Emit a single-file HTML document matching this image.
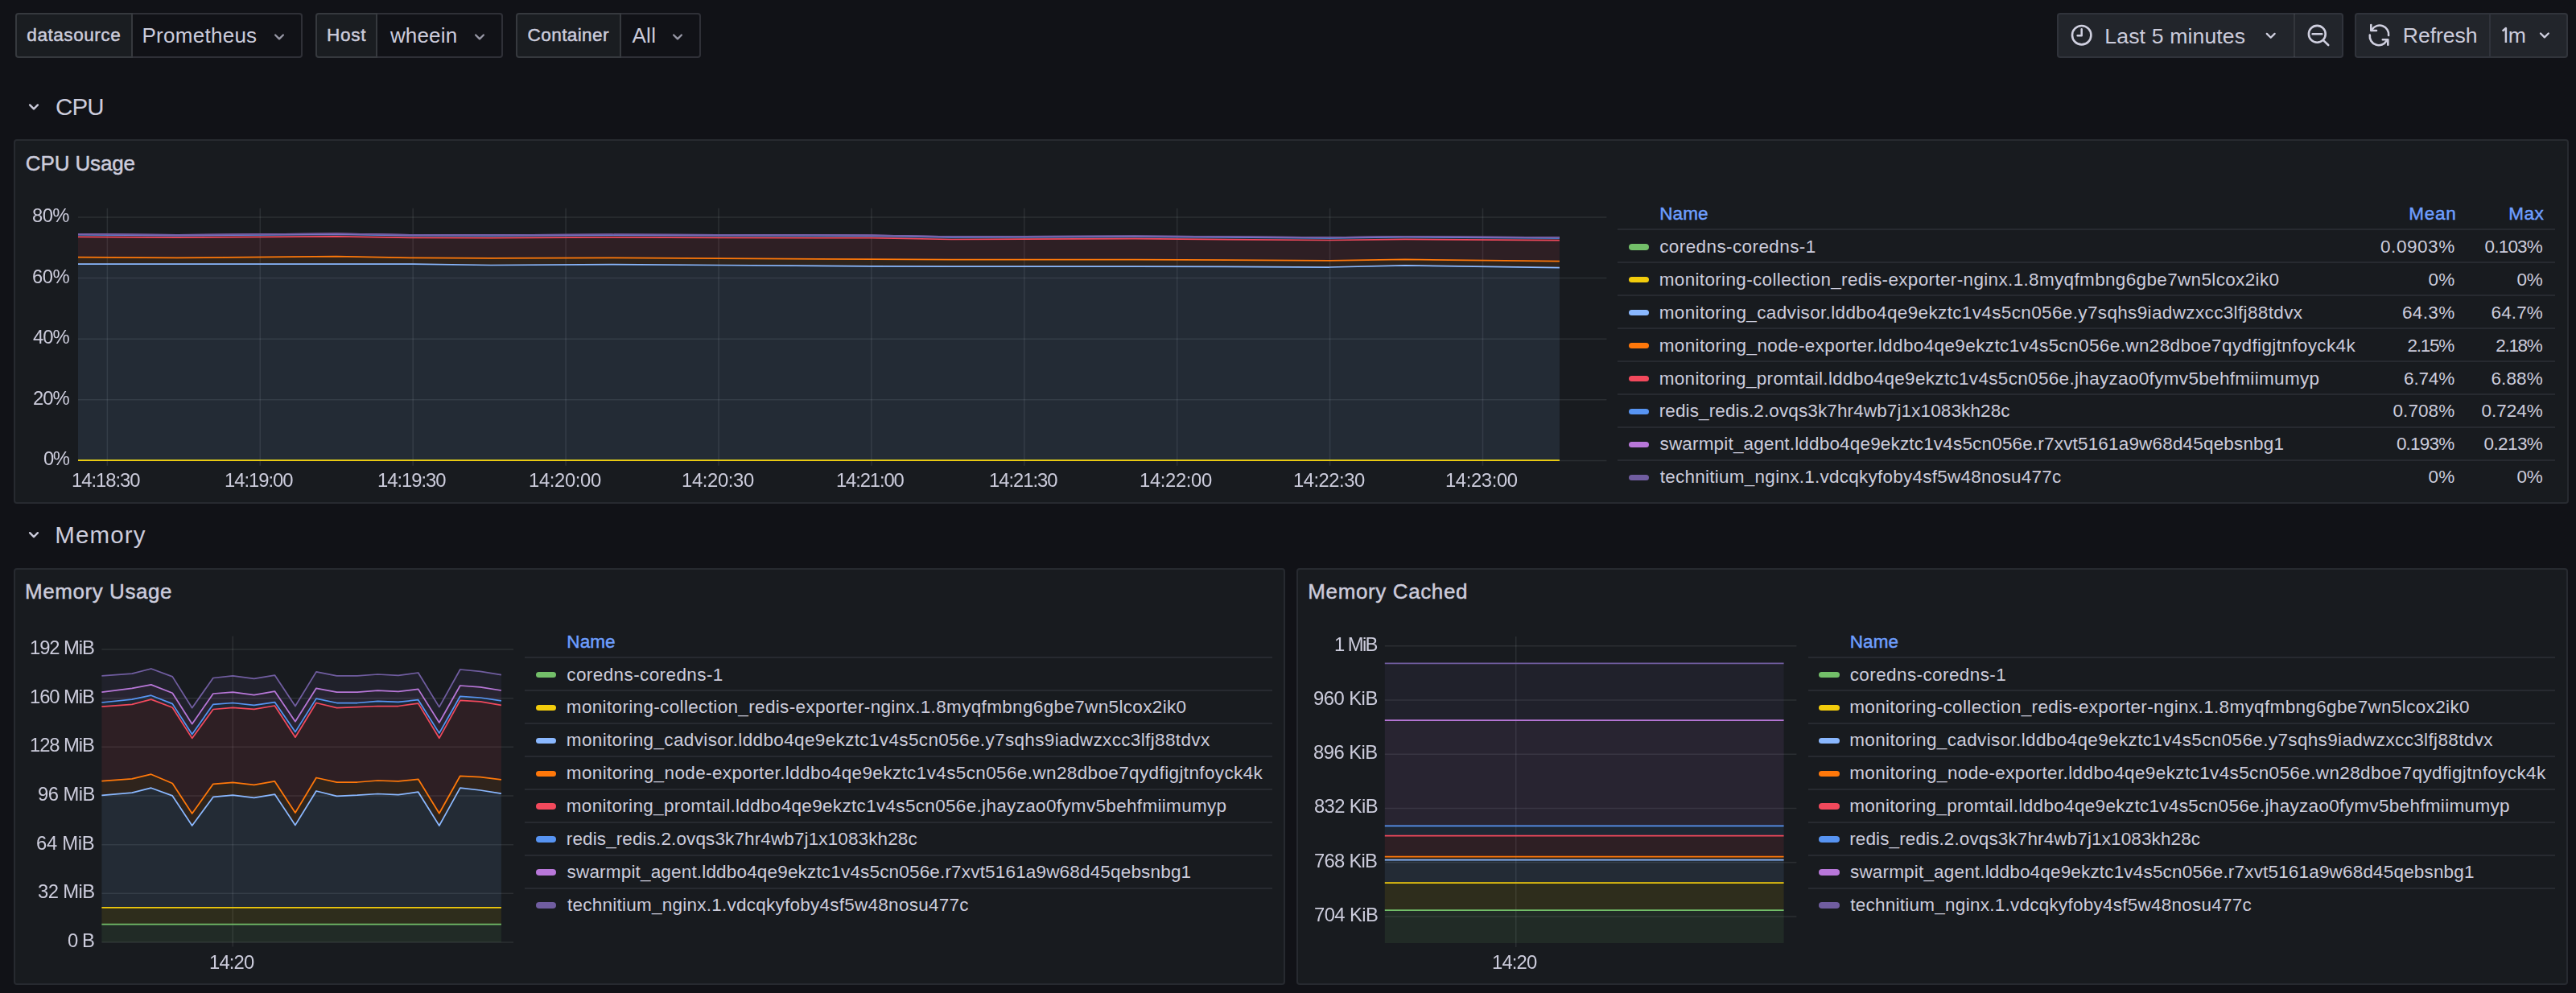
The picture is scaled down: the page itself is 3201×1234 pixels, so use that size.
<!DOCTYPE html>
<html><head><meta charset="utf-8"><title>Grafana dashboard</title>
<style>
html,body{margin:0;padding:0;}
body{width:3201px;height:1234px;background:#111217;overflow:hidden;position:relative;font-family:"Liberation Sans",sans-serif;}
.t,.ax{position:absolute;line-height:0;white-space:pre;}
.ax{will-change:transform;}
svg{position:absolute;left:0;top:0;}
</style></head><body>
<div style="position:absolute;left:19.0px;top:16.0px;width:145.5px;height:56.0px;box-sizing:border-box;background:#1a1d21;border:2px solid rgba(204,204,220,0.16);border-radius:4px 0 0 4px;"></div>
<div style="position:absolute;left:164.5px;top:16.0px;width:211.5px;height:56.0px;box-sizing:border-box;background:#111217;border:2px solid rgba(204,204,220,0.16);border-left:none;border-radius:0 4px 4px 0;"></div>
<div style="position:absolute;left:392.3px;top:16.0px;width:77.0px;height:56.0px;box-sizing:border-box;background:#1a1d21;border:2px solid rgba(204,204,220,0.16);border-radius:4px 0 0 4px;"></div>
<div style="position:absolute;left:469.3px;top:16.0px;width:155.5px;height:56.0px;box-sizing:border-box;background:#111217;border:2px solid rgba(204,204,220,0.16);border-left:none;border-radius:0 4px 4px 0;"></div>
<div style="position:absolute;left:641.3px;top:16.0px;width:130.3px;height:56.0px;box-sizing:border-box;background:#1a1d21;border:2px solid rgba(204,204,220,0.16);border-radius:4px 0 0 4px;"></div>
<div style="position:absolute;left:771.6px;top:16.0px;width:99.1px;height:56.0px;box-sizing:border-box;background:#111217;border:2px solid rgba(204,204,220,0.16);border-left:none;border-radius:0 4px 4px 0;"></div>
<div style="position:absolute;left:2556.2px;top:16.2px;width:355.5px;height:55.5px;box-sizing:border-box;background:#22252b;border:2px solid rgba(204,204,220,0.09);border-radius:4px;"></div>
<div style="position:absolute;left:2850px;top:17px;width:1.5px;height:54px;background:rgba(204,204,220,0.10)"></div>
<div style="position:absolute;left:2926.4px;top:16.2px;width:168.6px;height:55.5px;box-sizing:border-box;background:#22252b;border:2px solid rgba(204,204,220,0.09);border-radius:4px 0 0 4px;"></div>
<div style="position:absolute;left:3095.0px;top:16.2px;width:95.7px;height:55.5px;box-sizing:border-box;background:#22252b;border:2px solid rgba(204,204,220,0.09);border-left:none;border-radius:0 4px 4px 0;"></div>
<div style="position:absolute;left:17.0px;top:173.3px;width:3175.0px;height:452.3px;box-sizing:border-box;background:#181b1f;border:2px solid rgba(204,204,220,0.09);border-radius:4px;"></div>
<div style="position:absolute;left:17.0px;top:705.5px;width:1580.0px;height:518.1px;box-sizing:border-box;background:#181b1f;border:2px solid rgba(204,204,220,0.09);border-radius:4px;"></div>
<div style="position:absolute;left:1611.3px;top:705.5px;width:1579.7px;height:518.1px;box-sizing:border-box;background:#181b1f;border:2px solid rgba(204,204,220,0.09);border-radius:4px;"></div>
<div style="position:absolute;left:2010.0px;top:284.40px;width:1164.5px;height:2px;background:rgba(204,204,220,0.09)"></div>
<div style="position:absolute;left:2010.0px;top:325.33px;width:1164.5px;height:2px;background:rgba(204,204,220,0.09)"></div>
<div style="position:absolute;left:2010.0px;top:366.26px;width:1164.5px;height:2px;background:rgba(204,204,220,0.09)"></div>
<div style="position:absolute;left:2010.0px;top:407.19px;width:1164.5px;height:2px;background:rgba(204,204,220,0.09)"></div>
<div style="position:absolute;left:2010.0px;top:448.12px;width:1164.5px;height:2px;background:rgba(204,204,220,0.09)"></div>
<div style="position:absolute;left:2010.0px;top:489.05px;width:1164.5px;height:2px;background:rgba(204,204,220,0.09)"></div>
<div style="position:absolute;left:2010.0px;top:529.98px;width:1164.5px;height:2px;background:rgba(204,204,220,0.09)"></div>
<div style="position:absolute;left:2010.0px;top:570.91px;width:1164.5px;height:2px;background:rgba(204,204,220,0.09)"></div>
<div style="position:absolute;left:2023.8px;top:303.05px;width:25.3px;height:7.5px;border-radius:4px;background:#73BF69"></div>
<div style="position:absolute;left:2023.8px;top:343.98px;width:25.3px;height:7.5px;border-radius:4px;background:#F2CC0C"></div>
<div style="position:absolute;left:2023.8px;top:384.91px;width:25.3px;height:7.5px;border-radius:4px;background:#8AB8FF"></div>
<div style="position:absolute;left:2023.8px;top:425.84px;width:25.3px;height:7.5px;border-radius:4px;background:#FF780A"></div>
<div style="position:absolute;left:2023.8px;top:466.77px;width:25.3px;height:7.5px;border-radius:4px;background:#F2495C"></div>
<div style="position:absolute;left:2023.8px;top:507.70px;width:25.3px;height:7.5px;border-radius:4px;background:#5794F2"></div>
<div style="position:absolute;left:2023.8px;top:548.63px;width:25.3px;height:7.5px;border-radius:4px;background:#B877D9"></div>
<div style="position:absolute;left:2023.8px;top:589.56px;width:25.3px;height:7.5px;border-radius:4px;background:#705DA0"></div>
<div style="position:absolute;left:652.1px;top:816.10px;width:928.7px;height:2px;background:rgba(204,204,220,0.09)"></div>
<div style="position:absolute;left:652.1px;top:857.03px;width:928.7px;height:2px;background:rgba(204,204,220,0.09)"></div>
<div style="position:absolute;left:652.1px;top:897.96px;width:928.7px;height:2px;background:rgba(204,204,220,0.09)"></div>
<div style="position:absolute;left:652.1px;top:938.89px;width:928.7px;height:2px;background:rgba(204,204,220,0.09)"></div>
<div style="position:absolute;left:652.1px;top:979.82px;width:928.7px;height:2px;background:rgba(204,204,220,0.09)"></div>
<div style="position:absolute;left:652.1px;top:1020.75px;width:928.7px;height:2px;background:rgba(204,204,220,0.09)"></div>
<div style="position:absolute;left:652.1px;top:1061.68px;width:928.7px;height:2px;background:rgba(204,204,220,0.09)"></div>
<div style="position:absolute;left:652.1px;top:1102.61px;width:928.7px;height:2px;background:rgba(204,204,220,0.09)"></div>
<div style="position:absolute;left:665.9px;top:834.75px;width:25.3px;height:7.5px;border-radius:4px;background:#73BF69"></div>
<div style="position:absolute;left:665.9px;top:875.68px;width:25.3px;height:7.5px;border-radius:4px;background:#F2CC0C"></div>
<div style="position:absolute;left:665.9px;top:916.61px;width:25.3px;height:7.5px;border-radius:4px;background:#8AB8FF"></div>
<div style="position:absolute;left:665.9px;top:957.54px;width:25.3px;height:7.5px;border-radius:4px;background:#FF780A"></div>
<div style="position:absolute;left:665.9px;top:998.47px;width:25.3px;height:7.5px;border-radius:4px;background:#F2495C"></div>
<div style="position:absolute;left:665.9px;top:1039.40px;width:25.3px;height:7.5px;border-radius:4px;background:#5794F2"></div>
<div style="position:absolute;left:665.9px;top:1080.33px;width:25.3px;height:7.5px;border-radius:4px;background:#B877D9"></div>
<div style="position:absolute;left:665.9px;top:1121.26px;width:25.3px;height:7.5px;border-radius:4px;background:#705DA0"></div>
<div style="position:absolute;left:2246.5px;top:816.10px;width:928.3px;height:2px;background:rgba(204,204,220,0.09)"></div>
<div style="position:absolute;left:2246.5px;top:857.03px;width:928.3px;height:2px;background:rgba(204,204,220,0.09)"></div>
<div style="position:absolute;left:2246.5px;top:897.96px;width:928.3px;height:2px;background:rgba(204,204,220,0.09)"></div>
<div style="position:absolute;left:2246.5px;top:938.89px;width:928.3px;height:2px;background:rgba(204,204,220,0.09)"></div>
<div style="position:absolute;left:2246.5px;top:979.82px;width:928.3px;height:2px;background:rgba(204,204,220,0.09)"></div>
<div style="position:absolute;left:2246.5px;top:1020.75px;width:928.3px;height:2px;background:rgba(204,204,220,0.09)"></div>
<div style="position:absolute;left:2246.5px;top:1061.68px;width:928.3px;height:2px;background:rgba(204,204,220,0.09)"></div>
<div style="position:absolute;left:2246.5px;top:1102.61px;width:928.3px;height:2px;background:rgba(204,204,220,0.09)"></div>
<div style="position:absolute;left:2260.3px;top:834.75px;width:25.3px;height:7.5px;border-radius:4px;background:#73BF69"></div>
<div style="position:absolute;left:2260.3px;top:875.68px;width:25.3px;height:7.5px;border-radius:4px;background:#F2CC0C"></div>
<div style="position:absolute;left:2260.3px;top:916.61px;width:25.3px;height:7.5px;border-radius:4px;background:#8AB8FF"></div>
<div style="position:absolute;left:2260.3px;top:957.54px;width:25.3px;height:7.5px;border-radius:4px;background:#FF780A"></div>
<div style="position:absolute;left:2260.3px;top:998.47px;width:25.3px;height:7.5px;border-radius:4px;background:#F2495C"></div>
<div style="position:absolute;left:2260.3px;top:1039.40px;width:25.3px;height:7.5px;border-radius:4px;background:#5794F2"></div>
<div style="position:absolute;left:2260.3px;top:1080.33px;width:25.3px;height:7.5px;border-radius:4px;background:#B877D9"></div>
<div style="position:absolute;left:2260.3px;top:1121.26px;width:25.3px;height:7.5px;border-radius:4px;background:#705DA0"></div>
<svg width="3201" height="1234" viewBox="0 0 3201 1234">
<path d="M342.10 43.45 L347.00 48.35 L351.90 43.45" fill="none" stroke="#9898a6" stroke-width="2.3" stroke-linecap="round" stroke-linejoin="round"/>
<path d="M591.10 43.45 L596.00 48.35 L600.90 43.45" fill="none" stroke="#9898a6" stroke-width="2.3" stroke-linecap="round" stroke-linejoin="round"/>
<path d="M837.10 43.45 L842.00 48.35 L846.90 43.45" fill="none" stroke="#9898a6" stroke-width="2.3" stroke-linecap="round" stroke-linejoin="round"/>
<circle cx="2586.7" cy="43.7" r="11.7" fill="none" stroke="#d0d0e0" stroke-width="2.6"/>
<path d="M2586.7 36.3 L2586.7 44.2 L2581.6 44.2" fill="none" stroke="#d0d0e0" stroke-width="2.5" stroke-linecap="round" stroke-linejoin="round"/>
<path d="M2816.80 41.85 L2821.70 46.75 L2826.60 41.85" fill="none" stroke="#d0d0e0" stroke-width="2.3" stroke-linecap="round" stroke-linejoin="round"/>
<circle cx="2879.3" cy="42.3" r="10.4" fill="none" stroke="#d0d0e0" stroke-width="2.6"/>
<path d="M2873.6 42.3 L2885.3 42.3 M2887.6 50.6 L2893.2 56.0" fill="none" stroke="#d0d0e0" stroke-width="2.6" stroke-linecap="round"/>
<path d="M2947.6 36.6 A11.2 11.2 0 0 1 2968.1 44.0" fill="none" stroke="#d0d0e0" stroke-width="2.6" stroke-linecap="round"/>
<path d="M2946.3 31.0 L2946.3 38.0 L2953.0 38.0" fill="none" stroke="#d0d0e0" stroke-width="2.6" stroke-linecap="round" stroke-linejoin="round"/>
<path d="M2944.8 43.6 A11.2 11.2 0 0 0 2965.6 50.6" fill="none" stroke="#d0d0e0" stroke-width="2.6" stroke-linecap="round"/>
<path d="M2960.8 49.2 L2967.3 49.2 L2967.3 55.8" fill="none" stroke="#d0d0e0" stroke-width="2.6" stroke-linecap="round" stroke-linejoin="round"/>
<path d="M3109.6 38.6 L3113.9 35.0 L3113.9 53.0" fill="none" stroke="#ccccdc" stroke-width="2.5" stroke-linejoin="round"/>
<path d="M3157.00 41.45 L3161.90 46.35 L3166.80 41.45" fill="none" stroke="#d0d0e0" stroke-width="2.3" stroke-linecap="round" stroke-linejoin="round"/>
<path d="M37.10 130.45 L42.00 135.35 L46.90 130.45" fill="none" stroke="#ccccdc" stroke-width="2.4" stroke-linecap="round" stroke-linejoin="round"/>
<path d="M37.10 662.15 L42.00 667.05 L46.90 662.15" fill="none" stroke="#ccccdc" stroke-width="2.4" stroke-linecap="round" stroke-linejoin="round"/>
<line x1="97.0" y1="572.40" x2="1996.4" y2="572.40" stroke="rgba(240,250,255,0.09)" stroke-width="1.5"/>
<line x1="97.0" y1="496.80" x2="1996.4" y2="496.80" stroke="rgba(240,250,255,0.09)" stroke-width="1.5"/>
<line x1="97.0" y1="421.20" x2="1996.4" y2="421.20" stroke="rgba(240,250,255,0.09)" stroke-width="1.5"/>
<line x1="97.0" y1="345.60" x2="1996.4" y2="345.60" stroke="rgba(240,250,255,0.09)" stroke-width="1.5"/>
<line x1="97.0" y1="270.00" x2="1996.4" y2="270.00" stroke="rgba(240,250,255,0.09)" stroke-width="1.5"/>
<line x1="133.40" y1="258.7" x2="133.40" y2="578.7" stroke="rgba(240,250,255,0.09)" stroke-width="1.5"/>
<line x1="323.30" y1="258.7" x2="323.30" y2="578.7" stroke="rgba(240,250,255,0.09)" stroke-width="1.5"/>
<line x1="513.20" y1="258.7" x2="513.20" y2="578.7" stroke="rgba(240,250,255,0.09)" stroke-width="1.5"/>
<line x1="703.10" y1="258.7" x2="703.10" y2="578.7" stroke="rgba(240,250,255,0.09)" stroke-width="1.5"/>
<line x1="893.00" y1="258.7" x2="893.00" y2="578.7" stroke="rgba(240,250,255,0.09)" stroke-width="1.5"/>
<line x1="1082.90" y1="258.7" x2="1082.90" y2="578.7" stroke="rgba(240,250,255,0.09)" stroke-width="1.5"/>
<line x1="1272.80" y1="258.7" x2="1272.80" y2="578.7" stroke="rgba(240,250,255,0.09)" stroke-width="1.5"/>
<line x1="1462.70" y1="258.7" x2="1462.70" y2="578.7" stroke="rgba(240,250,255,0.09)" stroke-width="1.5"/>
<line x1="1652.60" y1="258.7" x2="1652.60" y2="578.7" stroke="rgba(240,250,255,0.09)" stroke-width="1.5"/>
<line x1="1842.50" y1="258.7" x2="1842.50" y2="578.7" stroke="rgba(240,250,255,0.09)" stroke-width="1.5"/>
<polygon points="97.00,572.10 220.00,572.10 418.00,572.10 513.00,572.10 610.00,572.10 760.00,572.10 893.00,572.10 1083.00,572.10 1182.00,572.10 1410.00,572.10 1652.00,572.10 1746.00,572.10 1937.90,572.10 1937.90,572.40 1746.00,572.40 1652.00,572.40 1410.00,572.40 1182.00,572.40 1083.00,572.40 893.00,572.40 760.00,572.40 610.00,572.40 513.00,572.40 418.00,572.40 220.00,572.40 97.00,572.40" fill="#73BF69" fill-opacity="0.1"/>
<polygon points="97.00,572.10 220.00,572.10 418.00,572.10 513.00,572.10 610.00,572.10 760.00,572.10 893.00,572.10 1083.00,572.10 1182.00,572.10 1410.00,572.10 1652.00,572.10 1746.00,572.10 1937.90,572.10 1937.90,572.10 1746.00,572.10 1652.00,572.10 1410.00,572.10 1182.00,572.10 1083.00,572.10 893.00,572.10 760.00,572.10 610.00,572.10 513.00,572.10 418.00,572.10 220.00,572.10 97.00,572.10" fill="#F2CC0C" fill-opacity="0.1"/>
<polygon points="97.00,328.20 220.00,328.20 418.00,328.20 513.00,328.20 610.00,329.50 760.00,328.70 893.00,329.50 1083.00,330.80 1182.00,331.00 1410.00,331.00 1652.00,332.00 1746.00,329.90 1937.90,332.70 1937.90,572.10 1746.00,572.10 1652.00,572.10 1410.00,572.10 1182.00,572.10 1083.00,572.10 893.00,572.10 760.00,572.10 610.00,572.10 513.00,572.10 418.00,572.10 220.00,572.10 97.00,572.10" fill="#8AB8FF" fill-opacity="0.1"/>
<polygon points="97.00,319.60 220.00,320.40 418.00,318.60 513.00,320.40 610.00,320.90 760.00,320.40 893.00,321.00 1083.00,322.20 1182.00,322.50 1410.00,322.50 1652.00,323.90 1746.00,322.40 1937.90,324.60 1937.90,332.70 1746.00,329.90 1652.00,332.00 1410.00,331.00 1182.00,331.00 1083.00,330.80 893.00,329.50 760.00,328.70 610.00,329.50 513.00,328.20 418.00,328.20 220.00,328.20 97.00,328.20" fill="#FF780A" fill-opacity="0.1"/>
<polygon points="97.00,294.40 220.00,295.20 418.00,293.90 513.00,295.40 610.00,295.60 760.00,294.90 893.00,295.30 1083.00,295.70 1182.00,297.50 1410.00,296.70 1652.00,298.50 1746.00,297.40 1937.90,298.50 1937.90,324.60 1746.00,322.40 1652.00,323.90 1410.00,322.50 1182.00,322.50 1083.00,322.20 893.00,321.00 760.00,320.40 610.00,320.90 513.00,320.40 418.00,318.60 220.00,320.40 97.00,319.60" fill="#F2495C" fill-opacity="0.1"/>
<polygon points="97.00,291.72 220.00,292.52 418.00,291.22 513.00,292.72 610.00,292.92 760.00,292.22 893.00,292.62 1083.00,293.02 1182.00,294.82 1410.00,294.02 1652.00,295.82 1746.00,294.72 1937.90,295.82 1937.90,298.50 1746.00,297.40 1652.00,298.50 1410.00,296.70 1182.00,297.50 1083.00,295.70 893.00,295.30 760.00,294.90 610.00,295.60 513.00,295.40 418.00,293.90 220.00,295.20 97.00,294.40" fill="#5794F2" fill-opacity="0.1"/>
<polygon points="97.00,290.99 220.00,291.79 418.00,290.49 513.00,291.99 610.00,292.19 760.00,291.49 893.00,291.89 1083.00,292.29 1182.00,294.09 1410.00,293.29 1652.00,295.09 1746.00,293.99 1937.90,295.09 1937.90,295.82 1746.00,294.72 1652.00,295.82 1410.00,294.02 1182.00,294.82 1083.00,293.02 893.00,292.62 760.00,292.22 610.00,292.92 513.00,292.72 418.00,291.22 220.00,292.52 97.00,291.72" fill="#B877D9" fill-opacity="0.1"/>
<polygon points="97.00,290.99 220.00,291.79 418.00,290.49 513.00,291.99 610.00,292.19 760.00,291.49 893.00,291.89 1083.00,292.29 1182.00,294.09 1410.00,293.29 1652.00,295.09 1746.00,293.99 1937.90,295.09 1937.90,295.09 1746.00,293.99 1652.00,295.09 1410.00,293.29 1182.00,294.09 1083.00,292.29 893.00,291.89 760.00,291.49 610.00,292.19 513.00,291.99 418.00,290.49 220.00,291.79 97.00,290.99" fill="#705DA0" fill-opacity="0.1"/>
<polyline points="97.00,572.10 220.00,572.10 418.00,572.10 513.00,572.10 610.00,572.10 760.00,572.10 893.00,572.10 1083.00,572.10 1182.00,572.10 1410.00,572.10 1652.00,572.10 1746.00,572.10 1937.90,572.10" fill="none" stroke="#73BF69" stroke-width="1.75" stroke-linejoin="round"/>
<polyline points="97.00,572.10 220.00,572.10 418.00,572.10 513.00,572.10 610.00,572.10 760.00,572.10 893.00,572.10 1083.00,572.10 1182.00,572.10 1410.00,572.10 1652.00,572.10 1746.00,572.10 1937.90,572.10" fill="none" stroke="#F2CC0C" stroke-width="1.75" stroke-linejoin="round"/>
<polyline points="97.00,328.20 220.00,328.20 418.00,328.20 513.00,328.20 610.00,329.50 760.00,328.70 893.00,329.50 1083.00,330.80 1182.00,331.00 1410.00,331.00 1652.00,332.00 1746.00,329.90 1937.90,332.70" fill="none" stroke="#8AB8FF" stroke-width="1.75" stroke-linejoin="round"/>
<polyline points="97.00,319.60 220.00,320.40 418.00,318.60 513.00,320.40 610.00,320.90 760.00,320.40 893.00,321.00 1083.00,322.20 1182.00,322.50 1410.00,322.50 1652.00,323.90 1746.00,322.40 1937.90,324.60" fill="none" stroke="#FF780A" stroke-width="1.75" stroke-linejoin="round"/>
<polyline points="97.00,294.40 220.00,295.20 418.00,293.90 513.00,295.40 610.00,295.60 760.00,294.90 893.00,295.30 1083.00,295.70 1182.00,297.50 1410.00,296.70 1652.00,298.50 1746.00,297.40 1937.90,298.50" fill="none" stroke="#F2495C" stroke-width="1.75" stroke-linejoin="round"/>
<polyline points="97.00,291.72 220.00,292.52 418.00,291.22 513.00,292.72 610.00,292.92 760.00,292.22 893.00,292.62 1083.00,293.02 1182.00,294.82 1410.00,294.02 1652.00,295.82 1746.00,294.72 1937.90,295.82" fill="none" stroke="#5794F2" stroke-width="1.75" stroke-linejoin="round"/>
<polyline points="97.00,290.99 220.00,291.79 418.00,290.49 513.00,291.99 610.00,292.19 760.00,291.49 893.00,291.89 1083.00,292.29 1182.00,294.09 1410.00,293.29 1652.00,295.09 1746.00,293.99 1937.90,295.09" fill="none" stroke="#B877D9" stroke-width="1.75" stroke-linejoin="round"/>
<polyline points="97.00,290.99 220.00,291.79 418.00,290.49 513.00,291.99 610.00,292.19 760.00,291.49 893.00,291.89 1083.00,292.29 1182.00,294.09 1410.00,293.29 1652.00,295.09 1746.00,293.99 1937.90,295.09" fill="none" stroke="#705DA0" stroke-width="1.75" stroke-linejoin="round"/>
<line x1="126.4" y1="1171.00" x2="638.0" y2="1171.00" stroke="rgba(240,250,255,0.09)" stroke-width="1.5"/>
<line x1="126.4" y1="1110.33" x2="638.0" y2="1110.33" stroke="rgba(240,250,255,0.09)" stroke-width="1.5"/>
<line x1="126.4" y1="1049.66" x2="638.0" y2="1049.66" stroke="rgba(240,250,255,0.09)" stroke-width="1.5"/>
<line x1="126.4" y1="988.99" x2="638.0" y2="988.99" stroke="rgba(240,250,255,0.09)" stroke-width="1.5"/>
<line x1="126.4" y1="928.32" x2="638.0" y2="928.32" stroke="rgba(240,250,255,0.09)" stroke-width="1.5"/>
<line x1="126.4" y1="867.65" x2="638.0" y2="867.65" stroke="rgba(240,250,255,0.09)" stroke-width="1.5"/>
<line x1="126.4" y1="806.98" x2="638.0" y2="806.98" stroke="rgba(240,250,255,0.09)" stroke-width="1.5"/>
<line x1="289.30" y1="790.6" x2="289.30" y2="1176.6" stroke="rgba(240,250,255,0.09)" stroke-width="1.5"/>
<polygon points="126.40,1148.50 164.00,1148.50 187.80,1148.50 214.30,1148.50 238.70,1148.50 264.90,1148.50 289.30,1148.50 315.70,1148.50 341.40,1148.50 366.90,1148.50 393.00,1148.50 418.50,1148.50 444.00,1148.50 469.40,1148.50 494.90,1148.50 519.70,1148.50 545.80,1148.50 571.80,1148.50 596.80,1148.50 622.90,1148.50 622.90,1171.00 596.80,1171.00 571.80,1171.00 545.80,1171.00 519.70,1171.00 494.90,1171.00 469.40,1171.00 444.00,1171.00 418.50,1171.00 393.00,1171.00 366.90,1171.00 341.40,1171.00 315.70,1171.00 289.30,1171.00 264.90,1171.00 238.70,1171.00 214.30,1171.00 187.80,1171.00 164.00,1171.00 126.40,1171.00" fill="#73BF69" fill-opacity="0.1"/>
<polygon points="126.40,1127.80 164.00,1127.80 187.80,1127.80 214.30,1127.80 238.70,1127.80 264.90,1127.80 289.30,1127.80 315.70,1127.80 341.40,1127.80 366.90,1127.80 393.00,1127.80 418.50,1127.80 444.00,1127.80 469.40,1127.80 494.90,1127.80 519.70,1127.80 545.80,1127.80 571.80,1127.80 596.80,1127.80 622.90,1127.80 622.90,1148.50 596.80,1148.50 571.80,1148.50 545.80,1148.50 519.70,1148.50 494.90,1148.50 469.40,1148.50 444.00,1148.50 418.50,1148.50 393.00,1148.50 366.90,1148.50 341.40,1148.50 315.70,1148.50 289.30,1148.50 264.90,1148.50 238.70,1148.50 214.30,1148.50 187.80,1148.50 164.00,1148.50 126.40,1148.50" fill="#F2CC0C" fill-opacity="0.1"/>
<polygon points="126.40,988.30 164.00,985.20 187.80,979.20 214.30,988.90 238.70,1026.00 264.90,990.40 289.30,988.20 315.70,991.30 341.40,987.10 366.90,1025.40 393.00,983.00 418.50,989.30 444.00,988.20 469.40,986.50 494.90,987.60 519.70,984.20 545.80,1026.00 571.80,979.20 596.80,982.00 622.90,986.20 622.90,1127.80 596.80,1127.80 571.80,1127.80 545.80,1127.80 519.70,1127.80 494.90,1127.80 469.40,1127.80 444.00,1127.80 418.50,1127.80 393.00,1127.80 366.90,1127.80 341.40,1127.80 315.70,1127.80 289.30,1127.80 264.90,1127.80 238.70,1127.80 214.30,1127.80 187.80,1127.80 164.00,1127.80 126.40,1127.80" fill="#8AB8FF" fill-opacity="0.1"/>
<polygon points="126.40,970.60 164.00,967.90 187.80,962.20 214.30,973.50 238.70,1011.00 264.90,974.30 289.30,972.40 315.70,975.40 341.40,970.90 366.90,1010.00 393.00,966.50 418.50,972.20 444.00,972.00 469.40,970.00 494.90,970.90 519.70,968.30 545.80,1010.80 571.80,964.30 596.80,965.60 622.90,968.90 622.90,986.20 596.80,982.00 571.80,979.20 545.80,1026.00 519.70,984.20 494.90,987.60 469.40,986.50 444.00,988.20 418.50,989.30 393.00,983.00 366.90,1025.40 341.40,987.10 315.70,991.30 289.30,988.20 264.90,990.40 238.70,1026.00 214.30,988.90 187.80,979.20 164.00,985.20 126.40,988.30" fill="#FF780A" fill-opacity="0.1"/>
<polygon points="126.40,878.20 164.00,875.30 187.80,869.10 214.30,879.30 238.70,917.40 264.90,881.50 289.30,879.30 315.70,881.40 341.40,877.00 366.90,916.20 393.00,873.50 418.50,879.70 444.00,878.60 469.40,877.50 494.90,877.50 519.70,874.10 545.80,917.30 571.80,870.40 596.80,871.90 622.90,876.30 622.90,968.90 596.80,965.60 571.80,964.30 545.80,1010.80 519.70,968.30 494.90,970.90 469.40,970.00 444.00,972.00 418.50,972.20 393.00,966.50 366.90,1010.00 341.40,970.90 315.70,975.40 289.30,972.40 264.90,974.30 238.70,1011.00 214.30,973.50 187.80,962.20 164.00,967.90 126.40,970.60" fill="#F2495C" fill-opacity="0.1"/>
<polygon points="126.40,873.00 164.00,869.10 187.80,864.20 214.30,874.60 238.70,912.50 264.90,875.30 289.30,873.50 315.70,876.30 341.40,872.60 366.90,909.60 393.00,868.10 418.50,873.50 444.00,873.50 469.40,871.30 494.90,872.40 519.70,869.70 545.80,911.10 571.80,865.30 596.80,867.00 622.90,870.80 622.90,876.30 596.80,871.90 571.80,870.40 545.80,917.30 519.70,874.10 494.90,877.50 469.40,877.50 444.00,878.60 418.50,879.70 393.00,873.50 366.90,916.20 341.40,877.00 315.70,881.40 289.30,879.30 264.90,881.50 238.70,917.40 214.30,879.30 187.80,869.10 164.00,875.30 126.40,878.20" fill="#5794F2" fill-opacity="0.1"/>
<polygon points="126.40,860.20 164.00,855.30 187.80,850.90 214.30,861.30 238.70,899.70 264.90,862.00 289.30,860.20 315.70,863.60 341.40,859.10 366.90,896.70 393.00,855.30 418.50,860.20 444.00,860.20 469.40,858.20 494.90,859.30 519.70,856.40 545.80,898.00 571.80,852.00 596.80,853.80 622.90,858.00 622.90,870.80 596.80,867.00 571.80,865.30 545.80,911.10 519.70,869.70 494.90,872.40 469.40,871.30 444.00,873.50 418.50,873.50 393.00,868.10 366.90,909.60 341.40,872.60 315.70,876.30 289.30,873.50 264.90,875.30 238.70,912.50 214.30,874.60 187.80,864.20 164.00,869.10 126.40,873.00" fill="#B877D9" fill-opacity="0.1"/>
<polygon points="126.40,839.80 164.00,837.20 187.80,831.00 214.30,840.90 238.70,879.70 264.90,842.50 289.30,839.80 315.70,843.40 341.40,839.10 366.90,877.50 393.00,834.90 418.50,839.80 444.00,839.80 469.40,838.00 494.90,839.40 519.70,836.00 545.80,878.60 571.80,832.00 596.80,834.30 622.90,838.70 622.90,858.00 596.80,853.80 571.80,852.00 545.80,898.00 519.70,856.40 494.90,859.30 469.40,858.20 444.00,860.20 418.50,860.20 393.00,855.30 366.90,896.70 341.40,859.10 315.70,863.60 289.30,860.20 264.90,862.00 238.70,899.70 214.30,861.30 187.80,850.90 164.00,855.30 126.40,860.20" fill="#705DA0" fill-opacity="0.1"/>
<polyline points="126.40,1148.50 164.00,1148.50 187.80,1148.50 214.30,1148.50 238.70,1148.50 264.90,1148.50 289.30,1148.50 315.70,1148.50 341.40,1148.50 366.90,1148.50 393.00,1148.50 418.50,1148.50 444.00,1148.50 469.40,1148.50 494.90,1148.50 519.70,1148.50 545.80,1148.50 571.80,1148.50 596.80,1148.50 622.90,1148.50" fill="none" stroke="#73BF69" stroke-width="1.75" stroke-linejoin="round"/>
<polyline points="126.40,1127.80 164.00,1127.80 187.80,1127.80 214.30,1127.80 238.70,1127.80 264.90,1127.80 289.30,1127.80 315.70,1127.80 341.40,1127.80 366.90,1127.80 393.00,1127.80 418.50,1127.80 444.00,1127.80 469.40,1127.80 494.90,1127.80 519.70,1127.80 545.80,1127.80 571.80,1127.80 596.80,1127.80 622.90,1127.80" fill="none" stroke="#F2CC0C" stroke-width="1.75" stroke-linejoin="round"/>
<polyline points="126.40,988.30 164.00,985.20 187.80,979.20 214.30,988.90 238.70,1026.00 264.90,990.40 289.30,988.20 315.70,991.30 341.40,987.10 366.90,1025.40 393.00,983.00 418.50,989.30 444.00,988.20 469.40,986.50 494.90,987.60 519.70,984.20 545.80,1026.00 571.80,979.20 596.80,982.00 622.90,986.20" fill="none" stroke="#8AB8FF" stroke-width="1.75" stroke-linejoin="round"/>
<polyline points="126.40,970.60 164.00,967.90 187.80,962.20 214.30,973.50 238.70,1011.00 264.90,974.30 289.30,972.40 315.70,975.40 341.40,970.90 366.90,1010.00 393.00,966.50 418.50,972.20 444.00,972.00 469.40,970.00 494.90,970.90 519.70,968.30 545.80,1010.80 571.80,964.30 596.80,965.60 622.90,968.90" fill="none" stroke="#FF780A" stroke-width="1.75" stroke-linejoin="round"/>
<polyline points="126.40,878.20 164.00,875.30 187.80,869.10 214.30,879.30 238.70,917.40 264.90,881.50 289.30,879.30 315.70,881.40 341.40,877.00 366.90,916.20 393.00,873.50 418.50,879.70 444.00,878.60 469.40,877.50 494.90,877.50 519.70,874.10 545.80,917.30 571.80,870.40 596.80,871.90 622.90,876.30" fill="none" stroke="#F2495C" stroke-width="1.75" stroke-linejoin="round"/>
<polyline points="126.40,873.00 164.00,869.10 187.80,864.20 214.30,874.60 238.70,912.50 264.90,875.30 289.30,873.50 315.70,876.30 341.40,872.60 366.90,909.60 393.00,868.10 418.50,873.50 444.00,873.50 469.40,871.30 494.90,872.40 519.70,869.70 545.80,911.10 571.80,865.30 596.80,867.00 622.90,870.80" fill="none" stroke="#5794F2" stroke-width="1.75" stroke-linejoin="round"/>
<polyline points="126.40,860.20 164.00,855.30 187.80,850.90 214.30,861.30 238.70,899.70 264.90,862.00 289.30,860.20 315.70,863.60 341.40,859.10 366.90,896.70 393.00,855.30 418.50,860.20 444.00,860.20 469.40,858.20 494.90,859.30 519.70,856.40 545.80,898.00 571.80,852.00 596.80,853.80 622.90,858.00" fill="none" stroke="#B877D9" stroke-width="1.75" stroke-linejoin="round"/>
<polyline points="126.40,839.80 164.00,837.20 187.80,831.00 214.30,840.90 238.70,879.70 264.90,842.50 289.30,839.80 315.70,843.40 341.40,839.10 366.90,877.50 393.00,834.90 418.50,839.80 444.00,839.80 469.40,838.00 494.90,839.40 519.70,836.00 545.80,878.60 571.80,832.00 596.80,834.30 622.90,838.70" fill="none" stroke="#705DA0" stroke-width="1.75" stroke-linejoin="round"/>
<line x1="1720.8" y1="802.80" x2="2232.4" y2="802.80" stroke="rgba(240,250,255,0.09)" stroke-width="1.5"/>
<line x1="1720.8" y1="870.02" x2="2232.4" y2="870.02" stroke="rgba(240,250,255,0.09)" stroke-width="1.5"/>
<line x1="1720.8" y1="937.24" x2="2232.4" y2="937.24" stroke="rgba(240,250,255,0.09)" stroke-width="1.5"/>
<line x1="1720.8" y1="1004.46" x2="2232.4" y2="1004.46" stroke="rgba(240,250,255,0.09)" stroke-width="1.5"/>
<line x1="1720.8" y1="1071.68" x2="2232.4" y2="1071.68" stroke="rgba(240,250,255,0.09)" stroke-width="1.5"/>
<line x1="1720.8" y1="1138.90" x2="2232.4" y2="1138.90" stroke="rgba(240,250,255,0.09)" stroke-width="1.5"/>
<line x1="1883.70" y1="791" x2="1883.70" y2="1177" stroke="rgba(240,250,255,0.09)" stroke-width="1.5"/>
<polygon points="1720.80,1131.20 2216.60,1131.20 2216.60,1172.00 1720.80,1172.00" fill="#73BF69" fill-opacity="0.1"/>
<polygon points="1720.80,1097.20 2216.60,1097.20 2216.60,1131.20 1720.80,1131.20" fill="#F2CC0C" fill-opacity="0.1"/>
<polygon points="1720.80,1068.70 2216.60,1068.70 2216.60,1097.20 1720.80,1097.20" fill="#8AB8FF" fill-opacity="0.1"/>
<polygon points="1720.80,1064.60 2216.60,1064.60 2216.60,1068.70 1720.80,1068.70" fill="#FF780A" fill-opacity="0.1"/>
<polygon points="1720.80,1038.60 2216.60,1038.60 2216.60,1064.60 1720.80,1064.60" fill="#F2495C" fill-opacity="0.1"/>
<polygon points="1720.80,1026.40 2216.60,1026.40 2216.60,1038.60 1720.80,1038.60" fill="#5794F2" fill-opacity="0.1"/>
<polygon points="1720.80,895.20 2216.60,895.20 2216.60,1026.40 1720.80,1026.40" fill="#B877D9" fill-opacity="0.1"/>
<polygon points="1720.80,824.30 2216.60,824.30 2216.60,895.20 1720.80,895.20" fill="#705DA0" fill-opacity="0.1"/>
<polyline points="1720.80,1131.20 2216.60,1131.20" fill="none" stroke="#73BF69" stroke-width="1.75" stroke-linejoin="round"/>
<polyline points="1720.80,1097.20 2216.60,1097.20" fill="none" stroke="#F2CC0C" stroke-width="1.75" stroke-linejoin="round"/>
<polyline points="1720.80,1068.70 2216.60,1068.70" fill="none" stroke="#8AB8FF" stroke-width="1.75" stroke-linejoin="round"/>
<polyline points="1720.80,1064.60 2216.60,1064.60" fill="none" stroke="#FF780A" stroke-width="1.75" stroke-linejoin="round"/>
<polyline points="1720.80,1038.60 2216.60,1038.60" fill="none" stroke="#F2495C" stroke-width="1.75" stroke-linejoin="round"/>
<polyline points="1720.80,1026.40 2216.60,1026.40" fill="none" stroke="#5794F2" stroke-width="1.75" stroke-linejoin="round"/>
<polyline points="1720.80,895.20 2216.60,895.20" fill="none" stroke="#B877D9" stroke-width="1.75" stroke-linejoin="round"/>
<polyline points="1720.80,824.30 2216.60,824.30" fill="none" stroke="#705DA0" stroke-width="1.75" stroke-linejoin="round"/>
</svg>
<div class="t" style="left:33.30px;top:44.20px;font-size:22.6px;color:#ccccdc;letter-spacing:0.517px;-webkit-text-stroke:0.45px #ccccdc">datasource</div>
<div class="t" style="left:176.47px;top:44.00px;font-size:26.0px;color:#ccccdc;letter-spacing:0.274px">Prometheus</div>
<div class="t" style="left:406.00px;top:44.20px;font-size:22.6px;color:#ccccdc;letter-spacing:0.703px;-webkit-text-stroke:0.45px #ccccdc">Host</div>
<div class="t" style="left:484.91px;top:44.00px;font-size:26.0px;color:#ccccdc;letter-spacing:0.172px">wheein</div>
<div class="t" style="left:655.60px;top:44.20px;font-size:22.6px;color:#ccccdc;letter-spacing:0.367px;-webkit-text-stroke:0.45px #ccccdc">Container</div>
<div class="t" style="left:785.40px;top:44.00px;font-size:26.0px;color:#ccccdc;letter-spacing:0.310px">All</div>
<div class="t" style="left:2615.32px;top:44.50px;font-size:26.6px;color:#ccccdc;letter-spacing:0.140px">Last 5 minutes</div>
<div class="t" style="left:2985.82px;top:43.90px;font-size:26.6px;color:#ccccdc;letter-spacing:-0.045px">Refresh</div>
<div class="t" style="left:3116.74px;top:43.90px;font-size:26.6px;color:#ccccdc">m</div>
<div class="t" style="left:69.12px;top:133.00px;font-size:29.5px;color:#ccccdc;letter-spacing:-0.928px">CPU</div>
<div class="t" style="left:68.20px;top:664.70px;font-size:29.5px;color:#ccccdc;letter-spacing:1.174px">Memory</div>
<div class="t" style="left:31.78px;top:202.90px;font-size:26.0px;color:#ccccdc;letter-spacing:-0.125px;-webkit-text-stroke:0.45px #ccccdc">CPU Usage</div>
<div class="t" style="left:30.97px;top:735.10px;font-size:26.0px;color:#ccccdc;letter-spacing:0.565px;-webkit-text-stroke:0.45px #ccccdc">Memory Usage</div>
<div class="t" style="left:1625.27px;top:735.10px;font-size:26.0px;color:#ccccdc;letter-spacing:0.621px;-webkit-text-stroke:0.45px #ccccdc">Memory Cached</div>
<div class="ax" style="left:53.60px;top:570.30px;font-size:23.8px;color:#ccccdc;letter-spacing:-1.436px">0%</div>
<div class="ax" style="left:41.00px;top:494.70px;font-size:23.8px;color:#ccccdc;letter-spacing:-1.036px">20%</div>
<div class="ax" style="left:41.00px;top:419.10px;font-size:23.8px;color:#ccccdc;letter-spacing:-1.036px">40%</div>
<div class="ax" style="left:39.90px;top:343.50px;font-size:23.8px;color:#ccccdc;letter-spacing:-0.486px">60%</div>
<div class="ax" style="left:40.10px;top:267.90px;font-size:23.8px;color:#ccccdc;letter-spacing:-0.586px">80%</div>
<div class="ax" style="left:89.35px;top:596.70px;font-size:23.8px;color:#ccccdc;letter-spacing:-1.015px">14:18:30</div>
<div class="ax" style="left:279.25px;top:596.70px;font-size:23.8px;color:#ccccdc;letter-spacing:-1.015px">14:19:00</div>
<div class="ax" style="left:469.15px;top:596.70px;font-size:23.8px;color:#ccccdc;letter-spacing:-1.015px">14:19:30</div>
<div class="ax" style="left:656.75px;top:596.70px;font-size:23.8px;color:#ccccdc;letter-spacing:-0.358px">14:20:00</div>
<div class="ax" style="left:846.65px;top:596.70px;font-size:23.8px;color:#ccccdc;letter-spacing:-0.358px">14:20:30</div>
<div class="ax" style="left:1039.25px;top:596.70px;font-size:23.8px;color:#ccccdc;letter-spacing:-1.130px">14:21:00</div>
<div class="ax" style="left:1228.75px;top:596.70px;font-size:23.8px;color:#ccccdc;letter-spacing:-1.015px">14:21:30</div>
<div class="ax" style="left:1416.35px;top:596.70px;font-size:23.8px;color:#ccccdc;letter-spacing:-0.358px">14:22:00</div>
<div class="ax" style="left:1606.75px;top:596.70px;font-size:23.8px;color:#ccccdc;letter-spacing:-0.501px">14:22:30</div>
<div class="ax" style="left:1796.20px;top:596.70px;font-size:23.8px;color:#ccccdc;letter-spacing:-0.372px">14:23:00</div>
<div class="ax" style="left:84.00px;top:1168.90px;font-size:23.8px;color:#ccccdc;letter-spacing:-0.874px">0 B</div>
<div class="ax" style="left:46.90px;top:1108.23px;font-size:23.8px;color:#ccccdc;letter-spacing:-0.600px">32 MiB</div>
<div class="ax" style="left:45.40px;top:1047.56px;font-size:23.8px;color:#ccccdc;letter-spacing:-0.300px">64 MiB</div>
<div class="ax" style="left:46.60px;top:986.89px;font-size:23.8px;color:#ccccdc;letter-spacing:-0.540px">96 MiB</div>
<div class="ax" style="left:37.00px;top:926.22px;font-size:23.8px;color:#ccccdc;letter-spacing:-1.056px">128 MiB</div>
<div class="ax" style="left:37.00px;top:865.55px;font-size:23.8px;color:#ccccdc;letter-spacing:-1.056px">160 MiB</div>
<div class="ax" style="left:37.00px;top:804.88px;font-size:23.8px;color:#ccccdc;letter-spacing:-1.056px">192 MiB</div>
<div class="ax" style="left:259.95px;top:1196.20px;font-size:23.8px;color:#ccccdc;letter-spacing:-0.855px">14:20</div>
<div class="ax" style="left:1657.90px;top:800.70px;font-size:23.8px;color:#ccccdc;letter-spacing:-1.591px">1 MiB</div>
<div class="ax" style="left:1632.10px;top:867.92px;font-size:23.8px;color:#ccccdc;letter-spacing:-0.514px">960 KiB</div>
<div class="ax" style="left:1632.20px;top:935.14px;font-size:23.8px;color:#ccccdc;letter-spacing:-0.531px">896 KiB</div>
<div class="ax" style="left:1632.70px;top:1002.36px;font-size:23.8px;color:#ccccdc;letter-spacing:-0.614px">832 KiB</div>
<div class="ax" style="left:1633.40px;top:1069.58px;font-size:23.8px;color:#ccccdc;letter-spacing:-0.731px">768 KiB</div>
<div class="ax" style="left:1632.50px;top:1136.80px;font-size:23.8px;color:#ccccdc;letter-spacing:-0.581px">704 KiB</div>
<div class="ax" style="left:1853.85px;top:1196.20px;font-size:23.8px;color:#ccccdc;letter-spacing:-0.855px">14:20</div>
<div class="t" style="left:2062.20px;top:266.00px;font-size:22.5px;color:#6e9fff;letter-spacing:0.098px;-webkit-text-stroke:0.45px #6e9fff">Name</div>
<div class="t" style="left:2993.30px;top:266.00px;font-size:22.5px;color:#6e9fff;letter-spacing:0.743px;-webkit-text-stroke:0.45px #6e9fff">Mean</div>
<div class="t" style="left:3117.20px;top:266.00px;font-size:22.5px;color:#6e9fff;letter-spacing:0.522px;-webkit-text-stroke:0.45px #6e9fff">Max</div>
<div class="t" style="left:2062.20px;top:306.80px;font-size:22.5px;color:#ccccdc;letter-spacing:0.401px">coredns-coredns-1</div>
<div class="t" style="left:2958.00px;top:306.80px;font-size:22.5px;color:#ccccdc;letter-spacing:0.564px">0.0903%</div>
<div class="t" style="left:3087.60px;top:306.80px;font-size:22.5px;color:#ccccdc;letter-spacing:-0.821px">0.103%</div>
<div class="t" style="left:2061.70px;top:347.73px;font-size:22.5px;color:#ccccdc;letter-spacing:0.343px">monitoring-collection_redis-exporter-nginx.1.8myqfmbng6gbe7wn5lcox2ik0</div>
<div class="t" style="left:3017.50px;top:347.73px;font-size:22.5px;color:#ccccdc;letter-spacing:0.187px">0%</div>
<div class="t" style="left:3127.40px;top:347.73px;font-size:22.5px;color:#ccccdc;letter-spacing:-0.113px">0%</div>
<div class="t" style="left:2061.70px;top:388.66px;font-size:22.5px;color:#ccccdc;letter-spacing:0.359px">monitoring_cadvisor.lddbo4qe9ekztc1v4s5cn056e.y7sqhs9iadwzxcc3lfj88tdvx</div>
<div class="t" style="left:2984.90px;top:388.66px;font-size:22.5px;color:#ccccdc;letter-spacing:0.377px">64.3%</div>
<div class="t" style="left:3095.50px;top:388.66px;font-size:22.5px;color:#ccccdc;letter-spacing:0.127px">64.7%</div>
<div class="t" style="left:2061.70px;top:429.59px;font-size:22.5px;color:#ccccdc;letter-spacing:0.376px">monitoring_node-exporter.lddbo4qe9ekztc1v4s5cn056e.wn28dboe7qydfigjtnfoyck4k</div>
<div class="t" style="left:2991.40px;top:429.59px;font-size:22.5px;color:#ccccdc;letter-spacing:-1.248px">2.15%</div>
<div class="t" style="left:3101.30px;top:429.59px;font-size:22.5px;color:#ccccdc;letter-spacing:-1.323px">2.18%</div>
<div class="t" style="left:2061.70px;top:470.52px;font-size:22.5px;color:#ccccdc;letter-spacing:0.320px">monitoring_promtail.lddbo4qe9ekztc1v4s5cn056e.jhayzao0fymv5behfmiimumyp</div>
<div class="t" style="left:2987.10px;top:470.52px;font-size:22.5px;color:#ccccdc;letter-spacing:-0.173px">6.74%</div>
<div class="t" style="left:3095.40px;top:470.52px;font-size:22.5px;color:#ccccdc;letter-spacing:0.152px">6.88%</div>
<div class="t" style="left:2061.70px;top:511.45px;font-size:22.5px;color:#ccccdc;letter-spacing:0.114px">redis_redis.2.ovqs3k7hr4wb7j1x1083kh28c</div>
<div class="t" style="left:2973.50px;top:511.45px;font-size:22.5px;color:#ccccdc;letter-spacing:0.079px">0.708%</div>
<div class="t" style="left:3083.40px;top:511.45px;font-size:22.5px;color:#ccccdc;letter-spacing:0.019px">0.724%</div>
<div class="t" style="left:2062.50px;top:552.38px;font-size:22.5px;color:#ccccdc;letter-spacing:0.172px">swarmpit_agent.lddbo4qe9ekztc1v4s5cn056e.r7xvt5161a9w68d45qebsnbg1</div>
<div class="t" style="left:2977.90px;top:552.38px;font-size:22.5px;color:#ccccdc;letter-spacing:-0.801px">0.193%</div>
<div class="t" style="left:3086.60px;top:552.38px;font-size:22.5px;color:#ccccdc;letter-spacing:-0.621px">0.213%</div>
<div class="t" style="left:2062.80px;top:593.31px;font-size:22.5px;color:#ccccdc;letter-spacing:0.250px">technitium_nginx.1.vdcqkyfoby4sf5w48nosu477c</div>
<div class="t" style="left:3017.50px;top:593.31px;font-size:22.5px;color:#ccccdc;letter-spacing:0.187px">0%</div>
<div class="t" style="left:3127.40px;top:593.31px;font-size:22.5px;color:#ccccdc;letter-spacing:-0.113px">0%</div>
<div class="t" style="left:704.30px;top:797.70px;font-size:22.5px;color:#6e9fff;letter-spacing:0.098px;-webkit-text-stroke:0.45px #6e9fff">Name</div>
<div class="t" style="left:704.30px;top:838.50px;font-size:22.5px;color:#ccccdc;letter-spacing:0.401px">coredns-coredns-1</div>
<div class="t" style="left:703.80px;top:879.43px;font-size:22.5px;color:#ccccdc;letter-spacing:0.343px">monitoring-collection_redis-exporter-nginx.1.8myqfmbng6gbe7wn5lcox2ik0</div>
<div class="t" style="left:703.80px;top:920.36px;font-size:22.5px;color:#ccccdc;letter-spacing:0.359px">monitoring_cadvisor.lddbo4qe9ekztc1v4s5cn056e.y7sqhs9iadwzxcc3lfj88tdvx</div>
<div class="t" style="left:703.80px;top:961.29px;font-size:22.5px;color:#ccccdc;letter-spacing:0.376px">monitoring_node-exporter.lddbo4qe9ekztc1v4s5cn056e.wn28dboe7qydfigjtnfoyck4k</div>
<div class="t" style="left:703.80px;top:1002.22px;font-size:22.5px;color:#ccccdc;letter-spacing:0.320px">monitoring_promtail.lddbo4qe9ekztc1v4s5cn056e.jhayzao0fymv5behfmiimumyp</div>
<div class="t" style="left:703.80px;top:1043.15px;font-size:22.5px;color:#ccccdc;letter-spacing:0.114px">redis_redis.2.ovqs3k7hr4wb7j1x1083kh28c</div>
<div class="t" style="left:704.60px;top:1084.08px;font-size:22.5px;color:#ccccdc;letter-spacing:0.172px">swarmpit_agent.lddbo4qe9ekztc1v4s5cn056e.r7xvt5161a9w68d45qebsnbg1</div>
<div class="t" style="left:704.90px;top:1125.01px;font-size:22.5px;color:#ccccdc;letter-spacing:0.250px">technitium_nginx.1.vdcqkyfoby4sf5w48nosu477c</div>
<div class="t" style="left:2298.70px;top:797.70px;font-size:22.5px;color:#6e9fff;letter-spacing:0.098px;-webkit-text-stroke:0.45px #6e9fff">Name</div>
<div class="t" style="left:2298.70px;top:838.50px;font-size:22.5px;color:#ccccdc;letter-spacing:0.401px">coredns-coredns-1</div>
<div class="t" style="left:2298.20px;top:879.43px;font-size:22.5px;color:#ccccdc;letter-spacing:0.343px">monitoring-collection_redis-exporter-nginx.1.8myqfmbng6gbe7wn5lcox2ik0</div>
<div class="t" style="left:2298.20px;top:920.36px;font-size:22.5px;color:#ccccdc;letter-spacing:0.359px">monitoring_cadvisor.lddbo4qe9ekztc1v4s5cn056e.y7sqhs9iadwzxcc3lfj88tdvx</div>
<div class="t" style="left:2298.20px;top:961.29px;font-size:22.5px;color:#ccccdc;letter-spacing:0.376px">monitoring_node-exporter.lddbo4qe9ekztc1v4s5cn056e.wn28dboe7qydfigjtnfoyck4k</div>
<div class="t" style="left:2298.20px;top:1002.22px;font-size:22.5px;color:#ccccdc;letter-spacing:0.320px">monitoring_promtail.lddbo4qe9ekztc1v4s5cn056e.jhayzao0fymv5behfmiimumyp</div>
<div class="t" style="left:2298.20px;top:1043.15px;font-size:22.5px;color:#ccccdc;letter-spacing:0.114px">redis_redis.2.ovqs3k7hr4wb7j1x1083kh28c</div>
<div class="t" style="left:2299.00px;top:1084.08px;font-size:22.5px;color:#ccccdc;letter-spacing:0.172px">swarmpit_agent.lddbo4qe9ekztc1v4s5cn056e.r7xvt5161a9w68d45qebsnbg1</div>
<div class="t" style="left:2299.30px;top:1125.01px;font-size:22.5px;color:#ccccdc;letter-spacing:0.250px">technitium_nginx.1.vdcqkyfoby4sf5w48nosu477c</div>
</body></html>
